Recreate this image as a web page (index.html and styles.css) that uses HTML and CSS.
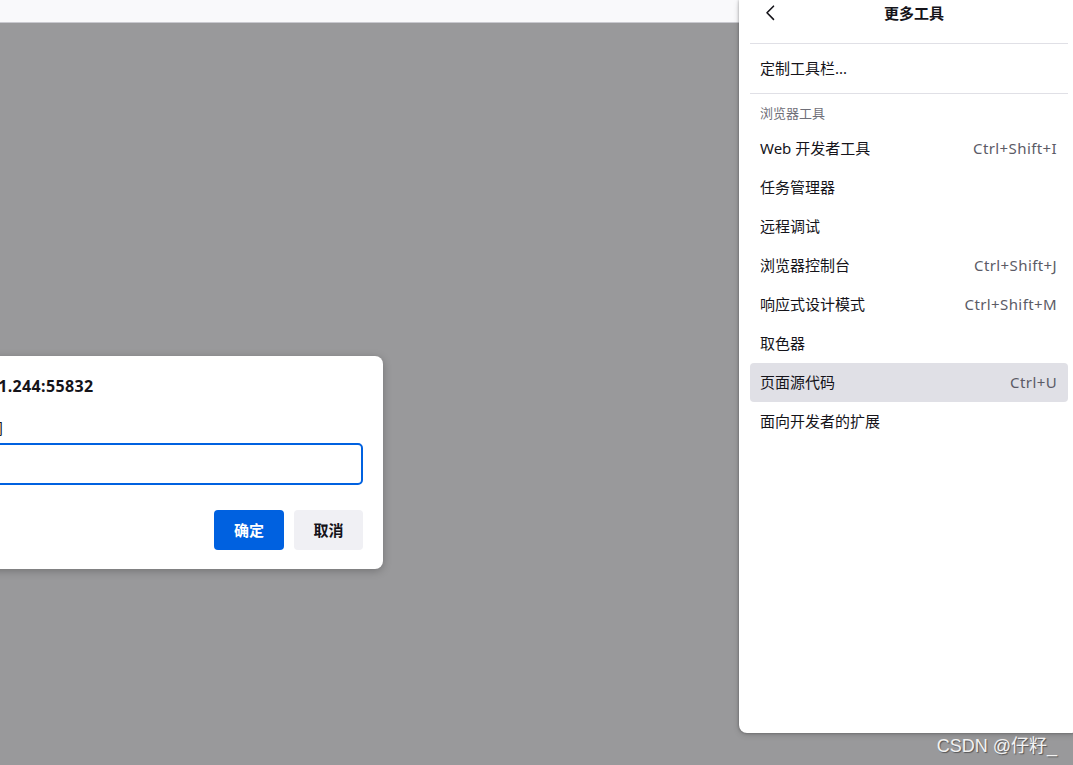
FILE: index.html
```html
<!DOCTYPE html>
<html lang="zh-CN">
<head>
<meta charset="utf-8">
<title>更多工具</title>
<link rel="stylesheet" href="styles.css">
</head>
<body>
<div class="topbar"></div>

<div class="dialog">
  <div class="dlg-title">192.168.31.244:55832</div>
  <div class="dlg-label">输入时间</div>
  <input class="dlg-input" type="text">
  <div class="dlg-buttons">
    <button class="btn btn-primary">确定</button>
    <button class="btn btn-secondary">取消</button>
  </div>
</div>

<div class="menu">
  <div class="menu-header">
    <div class="back">
      <svg width="16" height="16" viewBox="0 0 16 16"><path d="M10.5 1.2 L4 7.8 L10.5 14.4" fill="none" stroke="#15141a" stroke-width="1.6" stroke-linecap="round" stroke-linejoin="round"/></svg>
    </div>
    <div class="menu-title">更多工具</div>
  </div>
  <div class="sep sep-first"></div>
  <div class="item"><span>定制工具栏...</span></div>
  <div class="sep"></div>
  <div class="heading">浏览器工具</div>
  <div class="item"><span>Web 开发者工具</span><span class="key">Ctrl+Shift+I</span></div>
  <div class="item"><span>任务管理器</span></div>
  <div class="item"><span>远程调试</span></div>
  <div class="item"><span>浏览器控制台</span><span class="key">Ctrl+Shift+J</span></div>
  <div class="item"><span>响应式设计模式</span><span class="key">Ctrl+Shift+M</span></div>
  <div class="item"><span>取色器</span></div>
  <div class="item item-active"><span>页面源代码</span><span class="key">Ctrl+U</span></div>
  <div class="item"><span>面向开发者的扩展</span></div>
</div>

<div class="watermark">CSDN @仔籽_</div>
</body>
</html>
```

FILE: styles.css
```css
html, body {
  margin: 0;
  padding: 0;
}
body {
  width: 1073px;
  height: 765px;
  overflow: hidden;
  position: relative;
  background: #99999b;
  font-family: "Noto Sans", "Noto Sans CJK SC", sans-serif;
  color: #15141a;
}

.topbar {
  height: 22px;
  background: #f9f9fb;
  border-bottom: 1px solid #c9c9cf;
}

/* modal prompt */
.dialog {
  position: absolute;
  top: 356px;
  left: -85px;
  width: 468px;
  height: 213px;
  box-sizing: border-box;
  padding: 20px 20px 19px 24px;
  background: #ffffff;
  border-radius: 8px;
  box-shadow: 0 2px 8px rgba(0, 0, 0, 0.25);
  display: flex;
  flex-direction: column;
}
.dlg-title {
  margin-left: -17px;
  font-size: 16px;
  font-weight: 700;
  letter-spacing: 0.35px;
  line-height: 20px;
  height: 20px;
  white-space: nowrap;
}
.dlg-label {
  margin-top: 22px;
  padding-left: 4px;
  font-size: 15px;
  line-height: 20px;
  height: 20px;
  white-space: nowrap;
}
.dlg-input {
  margin: 5px 0 0 0;
  height: 42px;
  box-sizing: border-box;
  border: 2px solid #0061e0;
  border-radius: 5px;
  outline: none;
  padding: 0 8px;
  font: inherit;
}
.dlg-buttons {
  margin-top: 25px;
  display: flex;
  justify-content: flex-end;
  gap: 10px;
}
.btn {
  height: 40px;
  border: none;
  border-radius: 4px;
  font-family: "Noto Sans", "Noto Sans CJK SC", sans-serif;
  font-size: 15px;
  font-weight: 700;
  padding: 0 0 2px 0;
}
.btn-primary {
  width: 70px;
  background: #0061e0;
  color: #ffffff;
}
.btn-secondary {
  width: 69px;
  background: #f0f0f4;
  color: #15141a;
}

/* panel menu */
.menu {
  position: absolute;
  top: 0;
  left: 739px;
  width: 340px;
  height: 733px;
  box-sizing: border-box;
  padding: 0 11px;
  background: #ffffff;
  border-radius: 0 0 8px 8px;
  box-shadow: 0 0 3px rgba(0, 0, 0, 0.35), 0 2px 6px rgba(0, 0, 0, 0.15);
}
.menu-header {
  display: flex;
  align-items: center;
  height: 25px;
}
.back {
  width: 40px;
  display: flex;
  justify-content: center;
  align-items: center;
  height: 25px;
}
.back svg {
  display: block;
  margin-left: 2px;
  margin-top: 1px;
}
.menu-title {
  flex: 1;
  text-align: center;
  padding-right: 30px;
  font-size: 15px;
  font-weight: 700;
}
.sep {
  height: 1px;
  background: #e0e0e6;
  margin: 5px 0 0 0;
}
.sep-first {
  margin-top: 18px;
}
.item {
  height: 39px;
  box-sizing: border-box;
  display: flex;
  align-items: center;
  justify-content: space-between;
  padding: 0 11px 2px 10px;
  border-radius: 4px;
  font-size: 15px;
  white-space: nowrap;
}
.sep-first + .item {
  margin-top: 5px;
}
.item-active {
  background: #e0e0e6;
}
.key {
  color: #5b5b66;
  letter-spacing: 0.4px;
}
.heading {
  margin-top: 6px;
  height: 29px;
  line-height: 26px;
  padding-left: 10px;
  font-size: 13px;
  color: #6f6f78;
}

.watermark {
  position: absolute;
  right: 16px;
  bottom: 8px;
  font-family: "Liberation Sans", "Noto Sans CJK SC", sans-serif;
  font-size: 18px;
  color: #f2f2f2;
  text-shadow: 1px 1px 1px rgba(0, 0, 0, 0.45);
}
```
